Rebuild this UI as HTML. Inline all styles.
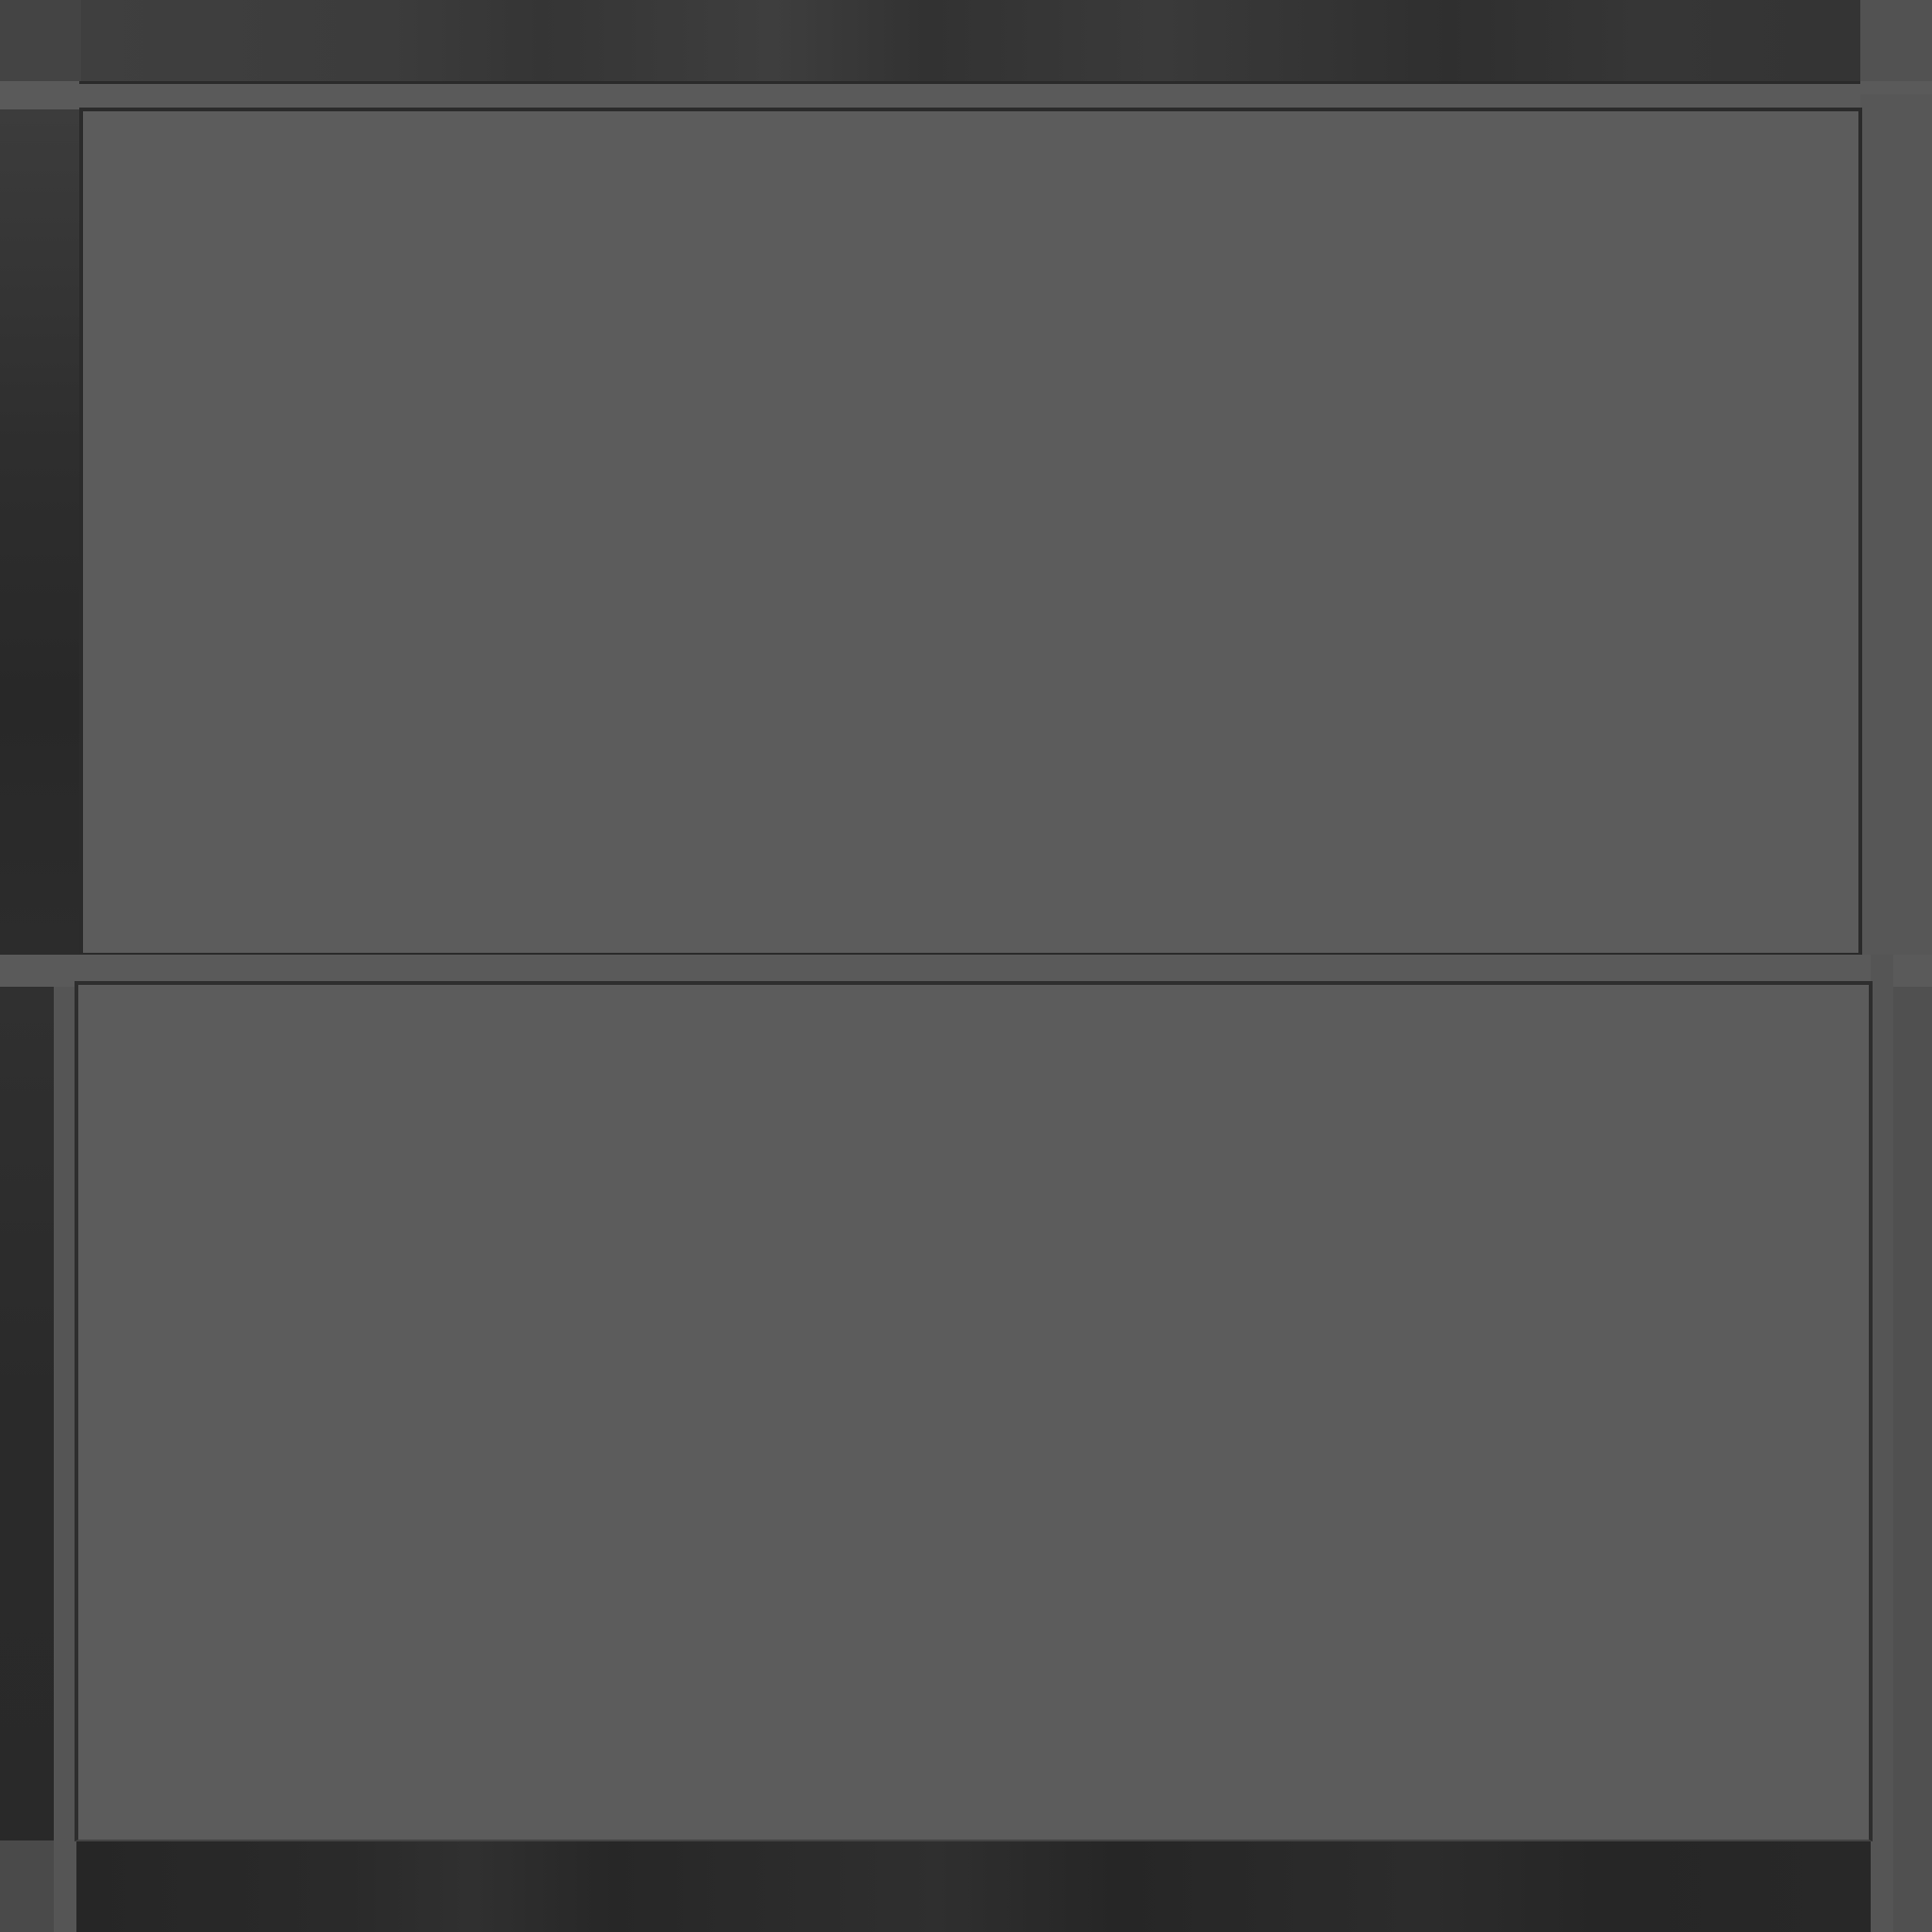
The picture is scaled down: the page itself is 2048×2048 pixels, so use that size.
<!DOCTYPE html>
<html><head><style>
body{margin:0;width:2048px;height:2048px;position:relative;overflow:hidden;background:#2c2c2c}
div{position:absolute;box-sizing:border-box}
</style></head><body>
<div style="left:0;top:0;width:2048px;height:88px;background:linear-gradient(90deg,#404040 0%,#3c3c3c 20%,#353535 28%,#3e3e3e 40%,#323232 48%,#3a3a3a 60%,#2f2f2f 75%,#363636 85%,#333 100%)"></div>
<div style="left:0;top:0;width:86px;height:88px;background:#444"></div>
<div style="left:1972px;top:0;width:76px;height:100px;background:#525252"></div>
<div style="left:0;top:86px;width:2048px;height:30px;background:#5a5a5a"></div>
<div style="left:84px;top:86px;width:1888px;height:3px;background:#2a2a2a"></div>
<div style="left:0;top:116px;width:86px;height:896px;background:linear-gradient(180deg,#3c3c3c,#2e2e2e 40%,#282828 70%,#2c2c2c)"></div>
<div style="left:1972px;top:100px;width:76px;height:912px;background:#575757"></div>
<div style="left:84px;top:114px;width:1890px;height:900px;background:#5c5c5c;border:4px solid #2b2b2b"></div>
<div style="left:0;top:1012px;width:2048px;height:34px;background:#5a5a5a"></div>
<div style="left:0;top:1046px;width:57px;height:905px;background:linear-gradient(180deg,#303030,#2a2a2a 50%,#292929)"></div>
<div style="left:57px;top:1046px;width:24px;height:1002px;background:#555"></div>
<div style="left:1983px;top:1012px;width:24px;height:1036px;background:#555"></div>
<div style="left:2007px;top:1046px;width:41px;height:1002px;background:#505050"></div>
<div style="left:79px;top:1040px;width:1906px;height:912px;background:#5c5c5c;border:4px solid #2e2e2e;border-bottom:2px solid #444"></div>
<div style="left:81px;top:1952px;width:1902px;height:96px;background:linear-gradient(90deg,#262626 0%,#2a2a2a 15%,#303030 22%,#272727 30%,#2f2f2f 48%,#262626 58%,#2c2c2c 75%,#262626 85%,#282828 100%)"></div>
<div style="left:0;top:1951px;width:57px;height:97px;background:#4a4a4a"></div>
</body></html>
